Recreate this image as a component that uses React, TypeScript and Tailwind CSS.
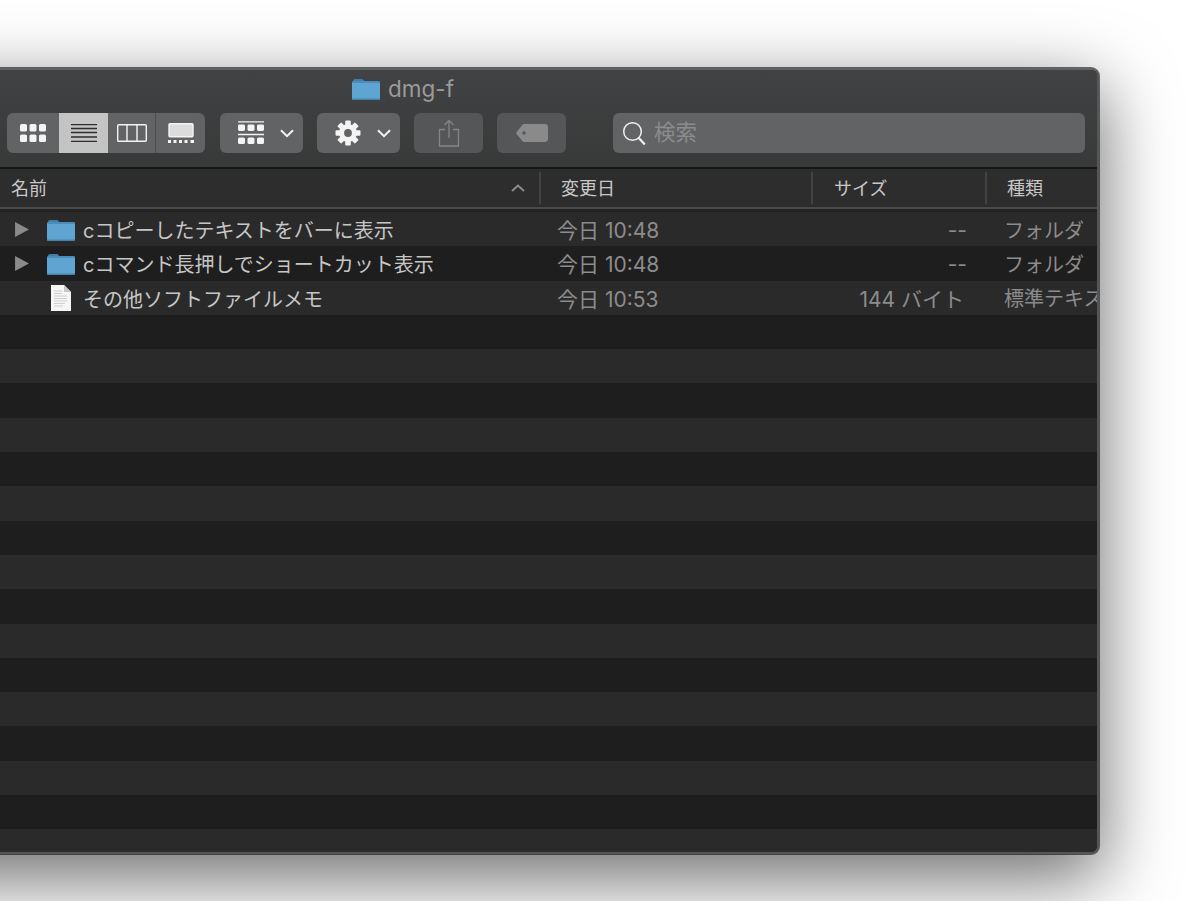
const font = { fontFamily: '"Inter", "Noto Sans CJK JP", sans-serif' };

const files = [
  { name: "cコピーしたテキストをバーに表示", date: "今日 10:48", size: "--", kind: "フォルダ", folder: true },
  { name: "cコマンド長押しでショートカット表示", date: "今日 10:48", size: "--", kind: "フォルダ", folder: true },
  { name: "その他ソフトファイルメモ", date: "今日 10:53", size: "144 バイト", kind: "標準テキスト書類", folder: false },
];

const emptyRows = Array.from({ length: 16 }, (_, i) => i);

function FolderIcon({ className }: { className: string }) {
  return (
    <svg viewBox="0 0 28 22" className={className}>
      <path d="M1 3.2C1 1.9 1.7 1 3 1h6.5c1 0 1.5.4 2.2 1.3l.7.9H1z" fill="#3f7fa8" />
      <path d="M0 5c0-1.2.8-2 2-2h24c1.2 0 2 .8 2 2v15c0 1.2-.8 2-2 2H2c-1.2 0-2-.8-2-2z" fill="#5ea6d1" />
      <path d="M0 4.5C0 3.6.8 3 2 3h24c1.2 0 2 .6 2 1.5V5H0z" fill="#4a8db8" />
      <rect x="0" y="20.6" width="28" height="1.4" rx="0.7" fill="#4782a8" />
    </svg>
  );
}

function DocIcon() {
  return (
    <svg viewBox="0 0 20 26" className="w-[20px] h-[26px]">
      <path d="M0 0h13l7 7v19H0z" fill="#f6f6f6" />
      <path d="M13 0l7 7h-7z" fill="#c9c9c9" />
      <path d="M3 6h8M3 8.5h8M3 11h13M3 13.5h13M3 16h13M3 18.5h11M3 21h9" stroke="#c4c4c4" strokeWidth="0.8" />
    </svg>
  );
}

function Chevron() {
  return (
    <svg viewBox="0 0 14 9" className="w-[14px] h-[9px]" fill="none" stroke="#f2f2f2" strokeWidth="2">
      <path d="M1 1.2l6 6 6-6" />
    </svg>
  );
}

function GearIcon() {
  const teeth = [0, 45, 90, 135, 180, 225, 270, 315];
  return (
    <svg viewBox="0 0 26 26" className="w-[26px] h-[26px]">
      {teeth.map((a) => (
        <rect key={a} x="10.2" y="0.5" width="5.6" height="6" rx="1" fill="#f4f4f4" transform={`rotate(${a} 13 13)`} />
      ))}
      <circle cx="13" cy="13" r="6.4" fill="none" stroke="#f4f4f4" strokeWidth="5" />
    </svg>
  );
}

function Toolbar() {
  return (
    <div className="flex items-center pl-[7px] gap-[14px] h-[40px]">
      <div className="flex h-[40px] w-[198px] rounded-[6px] overflow-hidden bg-[#626364]">
        <div className="w-[52px] flex items-center justify-center">
          <svg viewBox="0 0 26 18" className="w-[26px] h-[18px]" fill="#f4f4f4">
            <rect x="0" y="0" width="7" height="7.5" rx="1.6" />
            <rect x="9.5" y="0" width="7" height="7.5" rx="1.6" />
            <rect x="19" y="0" width="7" height="7.5" rx="1.6" />
            <rect x="0" y="10.5" width="7" height="7.5" rx="1.6" />
            <rect x="9.5" y="10.5" width="7" height="7.5" rx="1.6" />
            <rect x="19" y="10.5" width="7" height="7.5" rx="1.6" />
          </svg>
        </div>
        <div className="w-[49px] bg-[#c4c4c4] flex items-center justify-center">
          <svg viewBox="0 0 26 18" className="w-[26px] h-[18px]" stroke="#2d2d2d" strokeWidth="1.3">
            <path d="M0 .5h26M0 4.500h26M0 8.500h26M0 13h26M0 17.500h26" />
          </svg>
        </div>
        <div className="w-[48px] flex items-center justify-center border-r border-[#4c4d4e]">
          <svg viewBox="0 0 30 18" className="w-[30px] h-[18px]" fill="none" stroke="#f4f4f4" strokeWidth="1.4">
            <rect x="0.7" y="0.7" width="28.600" height="16.600" rx="1" />
            <path d="M10 1v16M20 1v16" />
          </svg>
        </div>
        <div className="w-[49px] flex items-center justify-center">
          <svg viewBox="0 0 26 20" className="w-[26px] h-[20px]">
            <rect x="1" y="0.7" width="24" height="13" rx="1" fill="#dcdcdc" stroke="#f4f4f4" strokeWidth="1.4" />
            <path d="M0 18.500h3M5.500 18.500h3M11 18.500h3M16.500 18.500h3M22.500 18.500h3.500" stroke="#f4f4f4" strokeWidth="3" />
          </svg>
        </div>
      </div>
      <div className="w-[83px] h-[40px] rounded-[6px] bg-[#626364] flex items-center pl-[18px] gap-[16px] ml-px">
        <svg viewBox="0 0 26 24" className="w-[26px] h-[24px]">
          <path d="M0 .8h26M0 13.500h26" stroke="#f4f4f4" strokeWidth="1.3" />
          {[0, 9.500, 19].map((x) => (
            <g key={x} fill="#f4f4f4">
              <rect x={x} y="3.500" width="7" height="6.500" rx="1.400" />
              <rect x={x} y="16.500" width="7" height="6.500" rx="1.600" />
            </g>
          ))}
        </svg>
        <Chevron />
      </div>
      <div className="w-[83px] h-[40px] rounded-[6px] bg-[#626364] flex items-center pl-[18px] gap-[16px]">
        <GearIcon />
        <Chevron />
      </div>
      <div className="w-[69px] h-[40px] rounded-[6px] bg-[#555657] flex items-center justify-center">
        <svg viewBox="0 0 22 28" className="w-[22px] h-[28px]" fill="none" stroke="#858585" strokeWidth="1.300">
          <path d="M7 10.500H1.500v16.500h19V10.500H15M11 19V1.500M6.500 6L11 1.500 15.500 6" />
        </svg>
      </div>
      <div className="w-[69px] h-[40px] rounded-[6px] bg-[#555657] flex items-center justify-center">
        <svg viewBox="0 0 32 18" className="w-[32px] h-[18px]">
          <path d="M8.500 0H29c1.700 0 3 1.300 3 3v12c0 1.700-1.300 3-3 3H8.500c-.8 0-1.400-.3-2-.8L1 10.500c-.9-.9-.9-2.100 0-3l5.500-6.700c.6-.5 1.200-.8 2-.8z" fill="#8a8a8a" />
          <circle cx="8" cy="9" r="1.700" fill="#555657" />
        </svg>
      </div>
      <div className="ml-[33px] w-[472px] h-[40px] rounded-[6px] bg-[#626364] flex items-center pl-[9px] gap-[8px]">
        <svg viewBox="0 0 24 25" className="w-[24px] h-[25px]" fill="none" stroke="#f0f0f0">
          <circle cx="10.500" cy="10.500" r="8.800" strokeWidth="1.500" />
          <path d="M16.800 17l6 6.500" strokeWidth="2.200" />
        </svg>
        <span className="text-[21.500px] leading-none text-[#8b8c8d]">検索</span>
      </div>
    </div>
  );
}

function HeaderRow() {
  return (
    <div className="flex h-[42px] shrink-0 bg-[#2d2d2e] border-t-2 border-b-2 border-t-[#151515] border-b-[#4a4a4a] text-[18px] text-[#c8c8c8]">
      <div className="w-[541px] shrink-0 flex items-center justify-between pl-[11px] pr-[14px] border-r-2 border-[#434344] my-[3px]">
        <span>名前</span>
        <svg viewBox="0 0 14 8" className="w-[14px] h-[8px]" fill="none" stroke="#8a8a8a" strokeWidth="2">
          <path d="M1 7l6-5.500L13 7" />
        </svg>
      </div>
      <div className="w-[272px] shrink-0 flex items-center pl-[20px] border-r-2 border-[#434344] my-[3px]">変更日</div>
      <div className="w-[174px] shrink-0 flex items-center pl-[21px] border-r-2 border-[#434344] my-[3px]">サイズ</div>
      <div className="flex-1 flex items-center pl-[20px] my-[3px]">種類</div>
    </div>
  );
}

export default function App() {
  return (
    <div className="w-[1200px] h-[901px] overflow-hidden bg-white pt-[68px]" style={font}>
      <div className="ml-[-100px] w-[1199px] h-[786px] pl-[100px] rounded-[8px] overflow-hidden flex flex-col bg-[#1e1e1e] border-t-2 border-r-2 border-b-2 border-t-[#626262] border-r-[#565656] border-b-[#565656] shadow-[0_22px_70px_4px_rgba(0,0,0,0.56),0_0_0_1px_rgba(0,0,0,0.55)]">
        <div className="bg-gradient-to-b from-[#414243] to-[#383939] h-[97px] shrink-0">
          <div className="flex items-center h-[43px] pb-[5px] pl-[352px] gap-[8px]">
            <FolderIcon className="w-[28px] h-[22px]" />
            <span className="text-[22.500px] text-[#9b9b9b]">dmg-f</span>
          </div>
          <Toolbar />
        </div>
        <HeaderRow />
        <div className="h-[3px] bg-[#232323] shrink-0" />
        <div className="flex-1 flex flex-col overflow-hidden">
          {files.map((f, i) => (
            <div
              key={f.name}
              className={`h-[34.3px] shrink-0 flex items-center text-[20px] whitespace-nowrap ${i % 2 === 0 ? "bg-[#2a2a2a]" : "bg-[#1e1e1e]"}`}
            >
              <div className="w-[540px] shrink-0 flex items-center text-[#c6c6c6]">
                <div className="w-[83px] shrink-0 relative h-[26px]">
                  {f.folder ? (
                    <>
                      <svg viewBox="0 0 13 14" className="absolute left-[15px] top-[6px] w-[14px] h-[15px]" fill="#8a8a8a">
                        <path d="M0 0l13 7-13 7z" />
                      </svg>
                      <FolderIcon className="absolute left-[47px] top-[3px] w-[28px] h-[22px]" />
                    </>
                  ) : (
                    <div className="absolute left-[51px] top-0">
                      <DocIcon />
                    </div>
                  )}
                </div>
                <span className="pt-[4px]">{f.name}</span>
              </div>
              <div className="w-[272px] shrink-0 pl-[17px] pt-[3px] text-[21px] text-[#8c8c8c]">{f.date}</div>
              <div className={`w-[174px] shrink-0 pt-[3px] text-[21px] text-right text-[#8c8c8c] ${f.folder ? "pr-[19px]" : "pr-[22px]"}`}>{f.size}</div>
              <div className="pl-[18px] pt-[3px] text-[#8c8c8c]">{f.kind}</div>
            </div>
          ))}
          {emptyRows.map((i) => (
            <div key={i} className={`h-[34.3px] shrink-0 ${i % 2 === 0 ? "bg-[#1e1e1e]" : "bg-[#2a2a2a]"}`} />
          ))}
        </div>
      </div>
    </div>
  );
}
